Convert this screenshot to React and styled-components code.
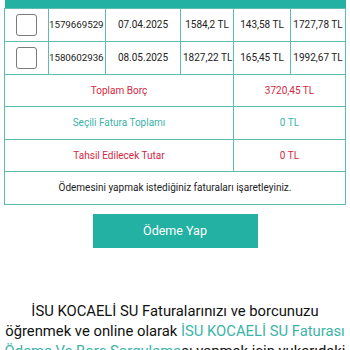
import React from 'react'
import { styled, createGlobalStyle } from 'styled-components'

const Global = createGlobalStyle`
  html, body { margin: 0; padding: 0; background: #fff; overflow: hidden; }
  body { font-family: Roboto, "Liberation Sans", Arial, sans-serif; }
`

const invoices = [
  { no: '1579669529', date: '07.04.2025', amount: '1584,2 TL', fee: '143,58 TL', total: '1727,78 TL' },
  { no: '1580602936', date: '08.05.2025', amount: '1827,22 TL', fee: '165,45 TL', total: '1992,67 TL' },
]

const App = () => {
  return (
    <Page>
      <Global />
      <Table>
        <colgroup>
          <col style={{ width: 44 }} />
          <col style={{ width: 57 }} />
          <col style={{ width: 75 }} />
          <col style={{ width: 53 }} />
          <col style={{ width: 57 }} />
          <col style={{ width: 55 }} />
        </colgroup>
        <thead>
          <tr>
            <Th>Seç</Th>
            <Th></Th>
            <Th>Tarih</Th>
            <Th>Tutar</Th>
            <Th>Bedel</Th>
            <Th>Total</Th>
          </tr>
        </thead>
        <tbody>
          {invoices.map((inv) => (
            <tr key={inv.no}>
              <Td><Check /></Td>
              <Td $tight>{inv.no}</Td>
              <Td>{inv.date}</Td>
              <Td>{inv.amount}</Td>
              <Td>{inv.fee}</Td>
              <Td>{inv.total}</Td>
            </tr>
          ))}
          <tr>
            <Sum colSpan={4} $tone="red">Toplam Borç</Sum>
            <Sum colSpan={2} $tone="red">3720,45 TL</Sum>
          </tr>
          <tr>
            <Sum colSpan={4} $tone="teal">Seçili Fatura Toplamı</Sum>
            <Sum colSpan={2} $tone="teal">0 TL</Sum>
          </tr>
          <tr>
            <Sum colSpan={4} $tone="red">Tahsil Edilecek Tutar</Sum>
            <Sum colSpan={2} $tone="red">0 TL</Sum>
          </tr>
          <tr>
            <Sum colSpan={6}>Ödemesini yapmak istediğiniz faturaları işaretleyiniz.</Sum>
          </tr>
        </tbody>
      </Table>
      <ButtonRow>
        <PayButton>Ödeme Yap</PayButton>
      </ButtonRow>
      <Info>
        İSU KOCAELİ SU Faturalarınızı ve borcunuzu öğrenmek ve online olarak{' '}
        <Link>İSU KOCAELİ SU Faturası Ödeme Ve Borç Sorgulama</Link>sı yapmak için yukarıdaki
        alanları kullanabilirsiniz.
      </Info>
    </Page>
  )
}

export default App

const Page = styled.div`
  width: 350px;
  margin-top: -16px;
`
const Table = styled.table`
  margin-left: 4px;
  width: 341px;
  table-layout: fixed;
  border-collapse: collapse;
  font-size: 10px;
  color: #222;
`
const Th = styled.th`
  height: 24px;
  padding: 0;
  background: #22b1a3;
  color: #fff;
  font-weight: 400;
  font-size: 11px;
  text-align: center;
  vertical-align: top;
  padding-top: 3px;
  box-sizing: border-box;
`
const Td = styled.td`
  height: 33px;
  padding: 0 ${(p) => (p.$tight ? '0' : '2px')};
  border: 1px solid #5dbdb3;
  white-space: nowrap;
  overflow: hidden;
  box-sizing: border-box;
  font-size: ${(p) => (p.$tight ? '9.8px' : '10px')};
  letter-spacing: ${(p) => (p.$tight ? '-0.05px' : '0')};
  text-align: ${(p) => (p.$tight ? 'left' : 'center')};
`
const Check = styled.span`
  display: inline-block;
  vertical-align: middle;
  width: 19px;
  height: 20px;
  border: 1.5px solid #7a7a7a;
  border-radius: 3px;
`
const Sum = styled.td`
  height: 32.5px;
  padding: 0;
  border: 1px solid #5dbdb3;
  text-align: center;
  box-sizing: border-box;
  color: ${(p) => (p.$tone === 'red' ? '#d3293f' : p.$tone === 'teal' ? '#3cb3a8' : '#222')};
`
const ButtonRow = styled.div`
  display: flex;
  justify-content: center;
  margin-top: 9px;
`
const PayButton = styled.button`
  width: 165px;
  height: 34px;
  border: none;
  background: #22b1a3;
  color: #fff;
  font-family: Roboto, sans-serif;
  font-size: 12.5px;
  cursor: pointer;
`
const Info = styled.p`
  margin: 53px 4px 0;
  text-align: center;
  font-family: Roboto, sans-serif;
  font-size: 14.8px;
  line-height: 20px;
  color: #111;
`
const Link = styled.span`
  color: #3cb3a8;
`
